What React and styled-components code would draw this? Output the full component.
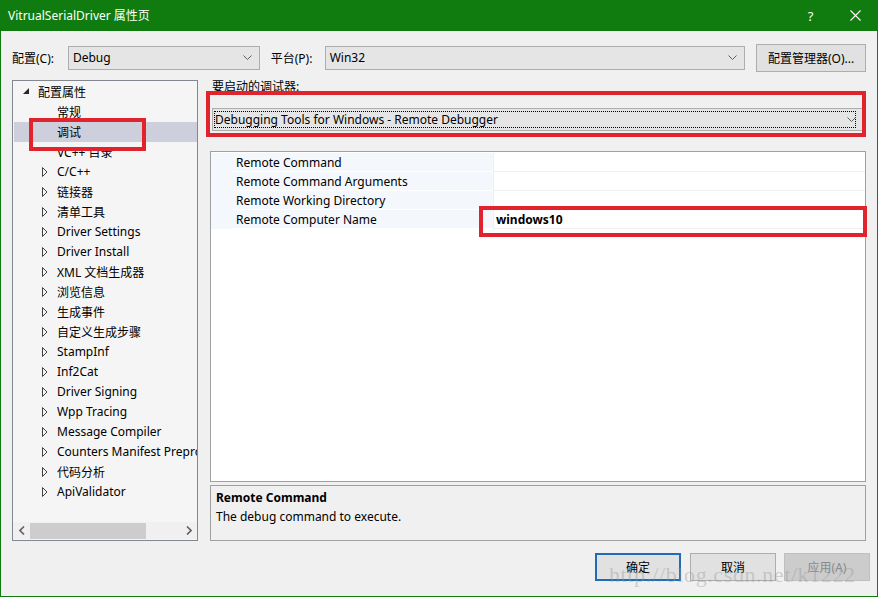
import React from 'react';
import styled, { createGlobalStyle } from 'styled-components';

const GlobalStyle = createGlobalStyle`
  html, body { margin: 0; padding: 0; background: #f0f0f0; }
  body { font-family: "Noto Sans", "Noto Sans CJK SC", sans-serif; font-size: 12px; color: #000; }
`;

const treeItems = [
  { label: '常规' },
  { label: '调试', selected: true },
  { label: 'VC++ 目录' },
  { label: 'C/C++', expandable: true },
  { label: '链接器', expandable: true },
  { label: '清单工具', expandable: true },
  { label: 'Driver Settings', expandable: true },
  { label: 'Driver Install', expandable: true },
  { label: 'XML 文档生成器', expandable: true },
  { label: '浏览信息', expandable: true },
  { label: '生成事件', expandable: true },
  { label: '自定义生成步骤', expandable: true },
  { label: 'StampInf', expandable: true },
  { label: 'Inf2Cat', expandable: true },
  { label: 'Driver Signing', expandable: true },
  { label: 'Wpp Tracing', expandable: true },
  { label: 'Message Compiler', expandable: true },
  { label: 'Counters Manifest Preprocessor', expandable: true },
  { label: '代码分析', expandable: true },
  { label: 'ApiValidator', expandable: true },
];

const props = [
  { name: 'Remote Command', value: '' },
  { name: 'Remote Command Arguments', value: '' },
  { name: 'Remote Working Directory', value: '' },
  { name: 'Remote Computer Name', value: 'windows10', bold: true },
];

const Window = styled.div`
  position: relative;
  width: 878px;
  height: 597px;
  box-sizing: border-box;
  border: 1px solid #107c10;
  border-top: none;
  background: #f0f0f0;
  display: flex;
  flex-direction: column;
  overflow: hidden;
`;

const TitleBar = styled.div`
  height: 31px;
  background: #107c10;
  color: #fff;
  display: flex;
  align-items: center;
  padding-left: 8px;
  margin: 0 -1px;
`;

const Title = styled.div`
  flex: 1;
  font-size: 12px;
  margin-top: -1px;
`;

const TitleButton = styled.div`
  width: 45px;
  height: 31px;
  display: flex;
  align-items: center;
  justify-content: center;
  font-size: 13px;
`;

const Body = styled.div`
  flex: 1;
  display: flex;
  flex-direction: column;
  padding: 13px 11px 0 11px;
`;

const ConfigRow = styled.div`
  display: flex;
  align-items: center;
  height: 27px;
`;

const Label = styled.span`
  width: ${p => p.w}px;
  white-space: nowrap;
`;

const Combo = styled.div`
  position: relative;
  width: ${p => p.w}px;
  height: 24px;
  box-sizing: border-box;
  border: 1px solid #adadad;
  background: #e5e5e5;
  display: flex;
  align-items: center;
  padding-left: 4px;
  margin-right: ${p => p.mr || 0}px;
`;

const Chevron = styled.svg`
  position: absolute;
  right: 7px;
  top: 50%;
  margin-top: -3px;
`;

const PushButton = styled.div`
  width: ${p => p.w || 86}px;
  height: ${p => p.h || 28}px;
  box-sizing: border-box;
  border: ${p => (p.primary ? '2px solid #1f6db8' : '1px solid #adadad')};
  background: ${p => (p.disabled ? '#cccccc' : '#e1e1e1')};
  color: ${p => (p.disabled ? '#8a8a8a' : '#000')};
  border-color: ${p => (p.disabled ? '#bfbfbf' : undefined)};
  display: flex;
  align-items: center;
  justify-content: center;
  margin-left: ${p => p.ml || 0}px;
`;

const Main = styled.div`
  display: grid;
  grid-template-columns: 186px 1fr;
  column-gap: 12px;
  height: 461px;
  margin-top: 9px;
`;

const Tree = styled.div`
  position: relative;
  box-sizing: border-box;
  border: 1px solid #828790;
  background: #f5f5f5;
  display: flex;
  flex-direction: column;
  overflow: hidden;
`;

const TreeList = styled.div`
  flex: 1;
  padding-top: 0.5px;
`;

const TreeRow = styled.div`
  height: 20px;
  display: flex;
  align-items: center;
  padding-left: ${p => p.indent}px;
  background: ${p => (p.selected ? '#cdd0dc' : 'transparent')};
  white-space: nowrap;
  overflow: hidden;
  margin-left: 1px;
`;

const Arrow = styled.span`
  width: 15px;
  flex-shrink: 0;
  display: flex;
  align-items: center;
`;

const HScroll = styled.div`
  height: 17px;
  display: flex;
  align-items: center;
  background: #f0f0f0;
  margin-bottom: 1px;
`;

const ScrollArrow = styled.div`
  width: 17px;
  height: 17px;
  display: flex;
  align-items: center;
  justify-content: center;
`;

const ScrollTrack = styled.div`
  flex: 1;
  height: 17px;
  display: flex;
  align-items: center;
`;

const ScrollThumb = styled.div`
  width: 116px;
  height: 16px;
  background: #cdcdcd;
`;

const RightPane = styled.div`
  position: relative;
  display: flex;
  flex-direction: column;
`;

const DebuggerLabel = styled.div`
  height: 20px;
  line-height: 14px;
  padding-left: 2px;
`;

const DebuggerCombo = styled.div`
  position: relative;
  height: 23px;
  margin: 8px 2px 0 2px;
  box-sizing: border-box;
  border: 1px solid #adadad;
  background: #e5e5e5;
  display: flex;
  align-items: center;
  padding: 0 1px;
`;

const FocusRect = styled.div`
  height: 17px;
  width: 642px;
  box-sizing: border-box;
  border: 1px dotted #000;
  display: flex;
  align-items: center;
`;

const Grid = styled.div`
  position: relative;
  flex: 1;
  margin-top: 20px;
  box-sizing: border-box;
  border: 1px solid #a0a0a0;
  background: #fff;
  padding-top: 1px;
`;

const GridRow = styled.div`
  display: grid;
  grid-template-columns: 21px 261px 1fr;
  height: 19px;
`;

const Gutter = styled.div`
  background: #f4f7fb;
`;

const NameCell = styled.div`
  background: #f4f7fb;
  border-bottom: 1px solid #ffffff;
  display: flex;
  align-items: center;
  padding-left: 4px;
  white-space: nowrap;
`;

const ValueCell = styled.div`
  border-bottom: 1px solid #f0f0f0;
  border-left: 1px solid #f0f0f0;
  display: flex;
  align-items: center;
  padding-left: 2px;
  font-weight: ${p => (p.bold ? 700 : 400)};
`;

const Description = styled.div`
  height: 56px;
  margin-top: 3px;
  box-sizing: border-box;
  border: 1px solid #a0a0a0;
  padding: 2px 5px;
  line-height: 19px;
`;

const DescTitle = styled.div`
  font-weight: 700;
`;

const Footer = styled.div`
  display: flex;
  justify-content: flex-end;
  margin-top: 12px;
  margin-right: -4px;
`;

const Annotation = styled.div`
  position: absolute;
  left: ${p => p.x}px;
  top: ${p => p.y}px;
  width: ${p => p.w}px;
  height: ${p => p.h}px;
  box-sizing: border-box;
  border: 4px solid #e0232c;
  pointer-events: none;
`;

const Watermark = styled.div`
  position: absolute;
  left: 608px;
  top: 562px;
  font-family: "Liberation Serif", "DejaVu Serif", serif;
  font-size: 22px;
  letter-spacing: 0.6px;
  color: rgba(150, 150, 150, 0.4);
  white-space: nowrap;
  pointer-events: none;
`;

const ChevronDown = () => (
  <Chevron width="9" height="5" viewBox="0 0 9 5">
    <path d="M0.5 0.5 L4.5 4.5 L8.5 0.5" fill="none" stroke="#606060" strokeWidth="1" />
  </Chevron>
);

const Expander = ({ open }) =>
  open ? (
    <svg width="7" height="7" viewBox="0 0 7 7">
      <path d="M6 0 L6 6 L0 6 Z" fill="#262626" />
    </svg>
  ) : (
    <svg width="6" height="10" viewBox="0 0 6 10">
      <path d="M0.5 0.5 L5 5 L0.5 9.5 Z" fill="none" stroke="#404040" strokeWidth="1" />
    </svg>
  );

export default function App() {
  return (
    <Window>
      <GlobalStyle />
      <TitleBar>
        <Title>VitrualSerialDriver 属性页</Title>
        <TitleButton>?</TitleButton>
        <TitleButton>
          <svg width="11" height="11" viewBox="0 0 11 11">
            <path d="M0.5 0.5 L10.5 10.5 M10.5 0.5 L0.5 10.5" stroke="#fff" strokeWidth="1.1" />
          </svg>
        </TitleButton>
      </TitleBar>
      <Body>
        <ConfigRow>
          <Label w={56}>配置(C):</Label>
          <Combo w={192} mr={11}>
            Debug
            <ChevronDown />
          </Combo>
          <Label w={54}>平台(P):</Label>
          <Combo w={421} mr={11}>
            Win32
            <ChevronDown />
          </Combo>
          <PushButton w={110} h={28}>配置管理器(O)...</PushButton>
        </ConfigRow>

        <Main>
          <Tree>
            <TreeList>
              <TreeRow indent={9}>
                <Arrow><Expander open /></Arrow>
                配置属性
              </TreeRow>
              {treeItems.map(item => (
                <TreeRow key={item.label} indent={28} selected={item.selected}>
                  <Arrow>{item.expandable && <Expander />}</Arrow>
                  {item.label}
                </TreeRow>
              ))}
            </TreeList>
            <HScroll>
              <ScrollArrow>
                <svg width="6" height="9" viewBox="0 0 6 9">
                  <path d="M5 0.5 L1 4.5 L5 8.5" fill="none" stroke="#606060" strokeWidth="1.6" />
                </svg>
              </ScrollArrow>
              <ScrollTrack>
                <ScrollThumb />
              </ScrollTrack>
              <ScrollArrow>
                <svg width="6" height="9" viewBox="0 0 6 9">
                  <path d="M1 0.5 L5 4.5 L1 8.5" fill="none" stroke="#606060" strokeWidth="1.6" />
                </svg>
              </ScrollArrow>
            </HScroll>
            <Annotation x={16} y={37} w={117} h={33} />
          </Tree>

          <RightPane>
            <DebuggerLabel>要启动的调试器:</DebuggerLabel>
            <DebuggerCombo>
              <FocusRect>Debugging Tools for Windows - Remote Debugger</FocusRect>
              <ChevronDown />
            </DebuggerCombo>
            <Grid>
              {props.map(p => (
                <GridRow key={p.name}>
                  <Gutter />
                  <NameCell>{p.name}</NameCell>
                  <ValueCell bold={p.bold}>{p.value}</ValueCell>
                </GridRow>
              ))}
              <Annotation x={268} y={54} w={388} h={31} />
            </Grid>
            <Description>
              <DescTitle>Remote Command</DescTitle>
              <div>The debug command to execute.</div>
            </Description>
            <Annotation x={-4} y={11} w={660} h={46} />
          </RightPane>
        </Main>

        <Footer>
          <PushButton primary>确定</PushButton>
          <PushButton ml={9}>取消</PushButton>
          <PushButton ml={8} disabled>应用(A)</PushButton>
        </Footer>
      </Body>
      <Watermark>http://blog.csdn.net/k1222</Watermark>
    </Window>
  );
}
